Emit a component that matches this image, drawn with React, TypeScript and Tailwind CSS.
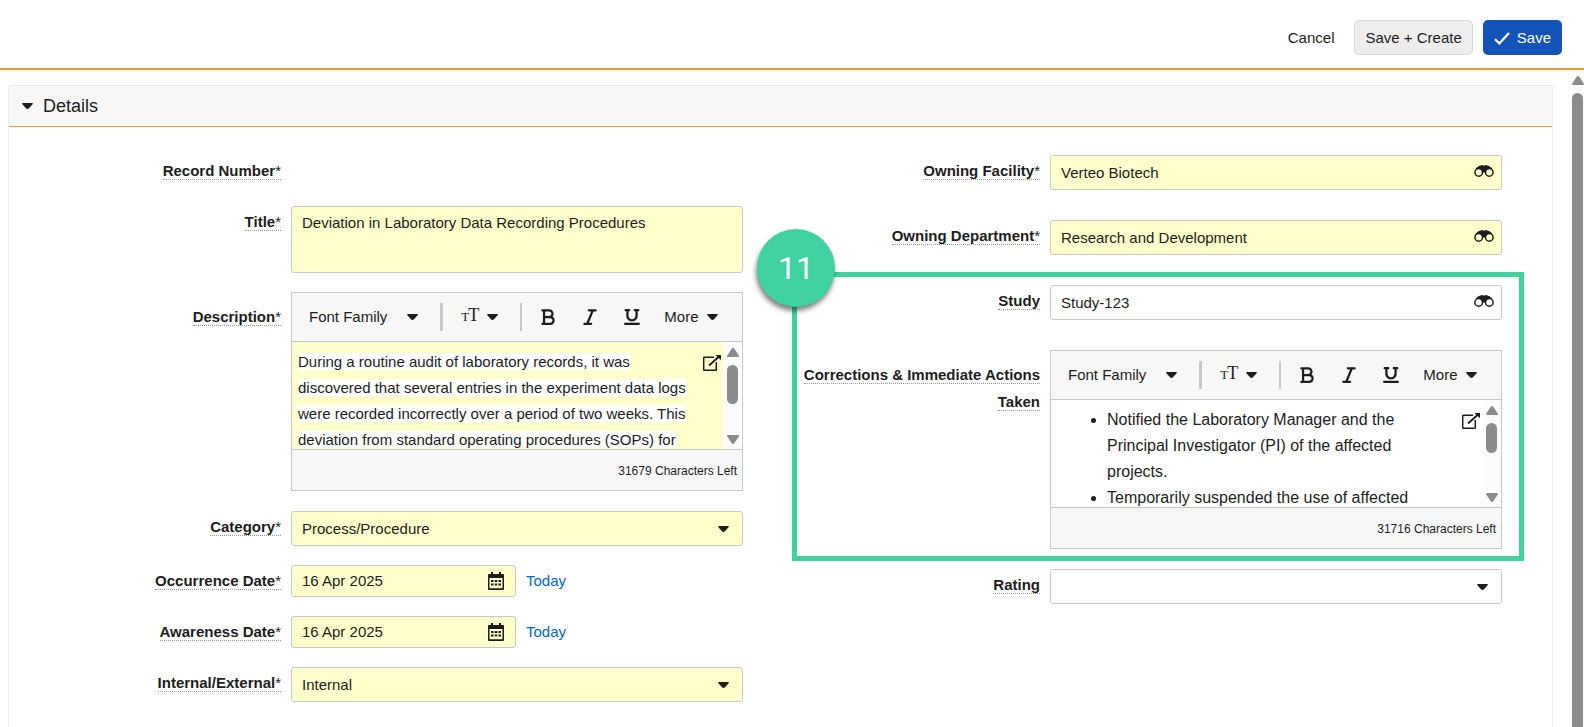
import { type ReactNode } from "react";
import { FaBold, FaItalic, FaUnderline } from "react-icons/fa6";

function Caret({ className = "" }: { className?: string }) {
  return (
    <svg viewBox="0 0 11 6" aria-hidden="true" className={`w-[11px] h-1.5 shrink-0 fill-current ${className}`}>
      <path d="M.9 0h9.200c.8 0 1 .8.5 1.300L7 5.300c-.9.900-2.100.9-3 0L.4 1.300C-.1.800.1 0 .9 0Z" />
    </svg>
  );
}

function ScrollArrow({ className = "" }: { className?: string }) {
  return (
    <svg viewBox="0 0 12 9" aria-hidden="true" className={`w-3 h-[9px] shrink-0 fill-current ${className}`}>
      <path d="M4.700.7c.7-.9 1.900-.9 2.600 0l4.500 6.800c.4.800.1 1.500-.7 1.500H.9c-.8 0-1.100-.7-.7-1.500Z" />
    </svg>
  );
}

function Binoculars() {
  return (
    <svg viewBox="0 0 20 12" aria-hidden="true" className="w-5 h-3">
      <path d="M1.500 4.500C3 2 4.500.9 6.200.8 7-.1 8.700-.2 9.200.6h1.600c.5-.8 2.200-.7 3 .2 1.700.1 3.200 1.200 4.700 3.700-2.300-1.500-5.200-1-6.500 1.500v1.500H8V6C6.700 3.500 3.800 3 1.500 4.500Z" fill="currentColor" />
      <circle cx="4.700" cy="7.400" r="3.800" fill="none" stroke="currentColor" strokeWidth="1.500" />
      <circle cx="15.300" cy="7.400" r="3.800" fill="none" stroke="currentColor" strokeWidth="1.500" />
    </svg>
  );
}

function CalendarIcon() {
  return (
    <svg viewBox="0 0 16 18" aria-hidden="true" className="w-4 h-[18px]">
      <path d="M3 0h2v2h6V0h2v2h2a1 1 0 0 1 1 1v14a1 1 0 0 1-1 1H1a1 1 0 0 1-1-1V3a1 1 0 0 1 1-1h2ZM1.500 6v10.300h13V6Z" fill="currentColor" fillRule="evenodd" />
      <path d="M3 8h2.500v2H3zM6.750 8h2.500v2h-2.500zM10.500 8H13v2h-2.500zM3 11.500h2.500v2H3zM6.750 11.500h2.500v2h-2.500zM10.500 11.500H13v2h-2.500z" fill="currentColor" />
    </svg>
  );
}

function PopOutIcon() {
  return (
    <svg viewBox="0 0 18 16" aria-hidden="true" className="w-[18px] h-4" fill="none" stroke="currentColor" strokeWidth="1.500">
      <path d="M11 2.200H1.500a.8.8 0 0 0-.8.8v11.500c0 .4.400.8.8.8h11c.4 0 .8-.4.8-.8V7" />
      <path d="M6 10.500 15.500 2" strokeWidth="1.800" />
      <path d="M12.500 0H18v5.200Z" fill="currentColor" stroke="none" />
    </svg>
  );
}

type RowProps = {
  id: string;
  label: string;
  required?: boolean;
  tall?: boolean;
  children?: ReactNode;
};

function Row({ id, label, required, tall, children }: RowProps) {
  return (
    <div className="flex gap-2.5 pr-[37px]">
      <div className={`w-[260px] shrink-0 text-right leading-[27px] ${tall ? "pt-[11px]" : "pt-0.5"}`}>
        <label htmlFor={id} className="font-bold border-b border-dotted border-[#999]">
          {label}
          {required && <span className="font-normal">*</span>}
        </label>
      </div>
      <div className="flex-1 min-w-0">{children}</div>
    </div>
  );
}

function Lookup({ id, value, filled }: { id: string; value: string; filled?: boolean }) {
  return (
    <div className="pb-[11px]">
      <div className={`flex items-center h-[35px] pl-2.5 pr-[7px] border border-[#c8c8c8] rounded-[3px] ${filled ? "bg-[#ffffcc]" : "bg-white"}`}>
        <input id={id} defaultValue={value} className="flex-1 min-w-0 pt-0.5 outline-none" />
        <button type="button" aria-label="Search" className="pb-1">
          <Binoculars />
        </button>
      </div>
    </div>
  );
}

function Select({ id, value, filled }: { id: string; value: string; filled?: boolean }) {
  return (
    <div className="relative">
      <select
        id={id}
        defaultValue={value}
        className={`block w-full h-[35px] pt-0.5 pl-2.5 border border-[#c8c8c8] rounded-[3px] appearance-none outline-none ${filled ? "bg-[#ffffcc]" : "bg-white"}`}
      >
        <option>{value}</option>
      </select>
      <Caret className="absolute right-3.5 top-[15px] pointer-events-none" />
    </div>
  );
}

function DateField({ id, value }: { id: string; value: string }) {
  return (
    <div className="flex items-center gap-2.5">
      <div className="flex items-center w-[225px] h-8 pl-2.5 pr-[11px] border border-[#c8c8c8] rounded-[3px] bg-[#ffffcc]">
        <input id={id} defaultValue={value} className="flex-1 min-w-0 outline-none" />
        <button type="button" aria-label="Open calendar">
          <CalendarIcon />
        </button>
      </div>
      <a href="#today" className="text-[#0066cc]">Today</a>
    </div>
  );
}

type EditorProps = {
  id: string;
  left: number;
  thumb: string;
  filled?: boolean;
  children: ReactNode;
};

function Editor({ id, left, thumb, filled, children }: EditorProps) {
  return (
    <div className="pb-px">
      <div className="border border-[#c8c8c8] bg-[#f7f7f7]">
        <div className="flex items-center h-12 pl-[17px]">
          <button type="button" className="flex items-center gap-5">
            Font Family
            <Caret />
          </button>
          <span className="w-[3px] h-7 ml-[22px] bg-[#c8c8c8]" />
          <button type="button" aria-label="Font size" className="flex items-center gap-2 ml-[18px] [font-family:'Liberation_Serif',serif]">
            <span className="flex items-baseline w-[18px] pb-0.5 leading-5">
              <span className="text-[13px] leading-5">T</span>
              <span className="-ml-px text-lg leading-5">T</span>
            </span>
            <Caret />
          </button>
          <span className="w-0.5 h-7 ml-[22px] bg-[#c8c8c8]" />
          <button type="button" aria-label="Bold" className="flex justify-center w-6 ml-3.5"><FaBold className="w-3.5 h-[18px]" /></button>
          <button type="button" aria-label="Italic" className="flex justify-center w-6 ml-[18px]"><FaItalic className="w-3.5 h-[18px]" /></button>
          <button type="button" aria-label="Underline" className="flex justify-center w-6 ml-[18px]"><FaUnderline className="w-4 h-5" /></button>
          <button type="button" className="flex items-center gap-2 ml-5">
            More
            <Caret />
          </button>
        </div>
        <div className={`flex h-[109px] border-y border-[#c8c8c8] overflow-hidden ${filled ? "bg-[#ffffcc]" : "bg-white"}`}>
          <div id={id} role="textbox" aria-multiline="true" tabIndex={0} className="flex-1 min-w-0 pt-[7px] leading-[26px] outline-none">
            {children}
          </div>
          <button type="button" aria-label="Open in window" className="self-start pt-[13px] pr-0.5">
            <PopOutIcon />
          </button>
          <div className="flex flex-col items-center w-[19px] pt-1.5 pb-[5px] bg-[#fcfcfc] text-[#8b8b8b]">
            <ScrollArrow />
            <span className={`w-[11px] mt-2 rounded-full bg-[#8b8b8b] ${thumb}`} />
            <ScrollArrow className="mt-auto rotate-180" />
          </div>
        </div>
        <div className="flex items-center justify-end h-10 pt-0.5 pr-[5px] text-xs">{left} Characters Left</div>
      </div>
    </div>
  );
}

export default function App() {
  return (
    <div className="flex flex-col h-screen overflow-hidden bg-white font-['Liberation_Sans',Arial,sans-serif] text-[15px] text-[#1d1d1d]">
      <header className="flex justify-end items-center h-[70px] pt-[7px] pr-[22px] border-b-2 border-[#f7982b] shrink-0">
        <button type="button" className="h-[35px] pt-px mr-5">Cancel</button>
        <button type="button" className="h-[35px] pt-px px-2.5 mr-2.5 border border-[#dadada] rounded-[5px] bg-[#ededed]">Save + Create</button>
        <button type="button" className="flex items-center gap-[7px] h-[35px] pt-px px-[11px] rounded-[5px] bg-[#1453b8] text-white">
          <svg viewBox="0 0 16 13" aria-hidden="true" className="w-4 h-[13px]" fill="none" stroke="currentColor" strokeWidth="2.200">
            <path d="m1 7.200 4.300 4.200L15 1" />
          </svg>
          Save
        </button>
      </header>

      <div className="flex flex-1 min-h-0">
        <main className="flex flex-1 min-w-0 pt-[15px] pl-2 pr-[15px]">
          <section className="flex-1 min-w-0 border border-b-0 border-[#ececec] rounded-t-[3px]">
            <h2 className="flex items-center gap-2.5 h-[41px] pl-[13px] border-b border-[#f7982b] bg-[#f7f7f7] text-lg">
              <Caret />
              Details
            </h2>

            <form className="grid grid-cols-2 pt-7 pl-3 pr-[13px]">
              <div className="flex flex-col gap-[19px]">
                <Row id="record" label="Record Number" required>
                  <output id="record" className="block h-8" />
                </Row>
                <Row id="title" label="Title" required>
                  <textarea
                    id="title"
                    defaultValue="Deviation in Laboratory Data Recording Procedures"
                    className="block w-full h-[67px] px-2.5 py-1.5 border border-[#c8c8c8] rounded-[3px] bg-[#ffffcc] leading-5 resize-none outline-none"
                  />
                </Row>
                <Row id="description" label="Description" required tall>
                  <Editor id="description" left={31679} thumb="h-[39px]" filled>
                    <p className="pl-1.5">
                      <span className="bg-white">
                        During a routine audit of laboratory records, it was discovered that several entries in the experiment data logs were recorded incorrectly over a period of two weeks. This deviation from standard operating procedures (SOPs) for
                      </span>
                    </p>
                  </Editor>
                </Row>
                <Row id="category" label="Category" required>
                  <Select id="category" value="Process/Procedure" filled />
                </Row>
                <Row id="occurrence" label="Occurrence Date" required>
                  <DateField id="occurrence" value="16 Apr 2025" />
                </Row>
                <Row id="awareness" label="Awareness Date" required>
                  <DateField id="awareness" value="16 Apr 2025" />
                </Row>
                <Row id="scope" label="Internal/External" required>
                  <Select id="scope" value="Internal" filled />
                </Row>
              </div>

              <div className="flex flex-col gap-[19px]">
                <Row id="facility" label="Owning Facility" required>
                  <Lookup id="facility" value="Verteo Biotech" filled />
                </Row>
                <Row id="department" label="Owning Department" required>
                  <Lookup id="department" value="Research and Development" filled />
                </Row>

                {/* highlighted step 11 */}
                <div className="relative flex flex-col gap-[19px]">
                  <Row id="study" label="Study">
                    <Lookup id="study" value="Study-123" />
                  </Row>
                  <Row id="corrections" label="Corrections & Immediate Actions Taken" tall>
                    <Editor id="corrections" left={31716} thumb="h-[30px]">
                      <ul className="pl-14 pr-10 list-disc text-base leading-[26px]">
                        <li>Notified the Laboratory Manager and the Principal Investigator (PI) of the affected projects.</li>
                        <li>Temporarily suspended the use of affected</li>
                      </ul>
                    </Editor>
                  </Row>
                  <div className="absolute -top-[13px] -bottom-[11px] left-3 right-[15px] border-5 border-[#40d39f] pointer-events-none">
                    <span className="absolute -left-10 -top-12 flex items-center justify-center size-[78px] rounded-full bg-[#40d39f] [font-family:Roboto,sans-serif] text-[32px] text-white shadow-[-1px_4px_5px_rgba(0,0,0,0.5)]">
                      11
                    </span>
                  </div>
                </div>

                <Row id="rating" label="Rating">
                  <Select id="rating" value="" />
                </Row>
              </div>
            </form>
          </section>
        </main>

        <div className="flex flex-col items-center w-4 pt-1.5 pl-[3px] bg-[#fcfcfc] text-[#8b8b8b]">
          <ScrollArrow />
          <span className="flex-1 w-[11px] mt-2 rounded-t-full bg-[#8b8b8b]" />
        </div>
      </div>
    </div>
  );
}
